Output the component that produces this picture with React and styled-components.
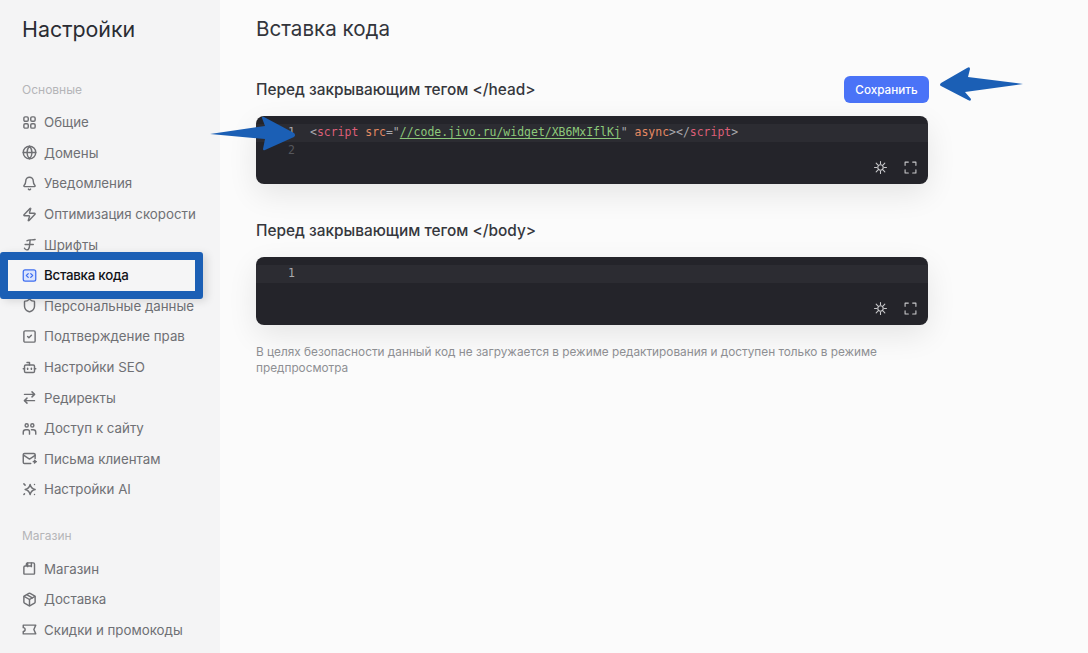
import React from 'react'
import styled, { createGlobalStyle } from 'styled-components'
import { Globe, Bell, Zap, Shield, SquareCheck, Bot, ArrowRightLeft, Package } from 'lucide-react'

const Global = createGlobalStyle`
  html, body { margin: 0; padding: 0; height: 100%; overflow: hidden; }
  body { font-family: Inter, "Noto Sans", sans-serif; background: #fbfbfb; }
`

const Page = styled.div`
  display: flex;
  height: 653px;
  overflow: hidden;
`

const Sidebar = styled.aside`
  flex: 0 0 220px;
  background: #f4f4f5;
  padding-top: 15px;
  box-sizing: border-box;
  overflow: hidden;
`

const SideTitle = styled.div`
  font-size: 21.4px;
  line-height: 28px;
  color: #2a2c33;
  padding-left: 22px;
  margin-bottom: 39px;
`

const GroupLabel = styled.div`
  font-size: 12px;
  line-height: 16px;
  color: #b4b5b8;
  padding-left: 22px;
  margin-bottom: 9px;
`

const Group = styled.div`
  margin-bottom: 23.5px;
`

const Row = styled.div`
  display: flex;
  align-items: center;
  gap: 7px;
  height: 30.6px;
  padding-left: 22px;
  font-size: 13.3px;
  color: ${p => (p.$active ? '#111216' : '#6f7074')};
  font-weight: ${p => (p.$active ? 500 : 400)};
  position: ${p => (p.$active ? 'relative' : 'static')};

  ${p => p.$active && `
    letter-spacing: -0.25px;
    &::before {
      content: '';
      position: absolute;
      left: 0;
      right: 17px;
      top: -7.5px;
      bottom: -8px;
      border: 8px solid #1b5fb5;
      border-radius: 3px;
      background: #f5f5f6;
      box-shadow: 4px 2px 8px rgba(0, 0, 0, 0.12);
    }
    & > * { position: relative; z-index: 1; }
  `}
`

const IconBox = styled.span`
  display: flex;
  width: 15px;
  height: 15px;
  color: ${p => (p.$active ? '#3f6ef0' : '#6f7074')};
  svg { width: 15px; height: 15px; stroke-width: 2.3; }
`

const Main = styled.main`
  flex: 1;
  padding: 15px 0 0 36px;
  position: relative;
`

const Heading = styled.h1`
  margin: 0 0 32px;
  font-size: 20.6px;
  line-height: 28px;
  font-weight: 400;
  color: #33353b;
`

const Section = styled.section`
  width: 672px;
  margin-bottom: 32px;
`

const SectionHead = styled.div`
  display: flex;
  align-items: center;
  justify-content: space-between;
  height: 28px;
  margin-bottom: 13px;
`

const SectionTitle = styled.h2`
  margin: 0;
  font-size: 15.4px;
  font-weight: 500;
  color: #35373d;
`

const SaveButton = styled.button`
  width: 85px;
  height: 26.5px;
  margin: 1px -1px 0 0;
  padding: 0;
  border: 0;
  border-radius: 6px;
  background: #4a73f7;
  color: #fff;
  font-family: inherit;
  font-size: 11.7px;
  font-weight: 500;
`

const Editor = styled.div`
  height: 68px;
  position: relative;
  border-radius: 8px;
  background: #24242a;
  box-shadow: 0 10px 30px rgba(0, 0, 0, 0.09);
  padding-top: 8px;
  box-sizing: border-box;
  font-family: "DejaVu Sans Mono", monospace;
  font-size: 11.47px;
  line-height: 17.5px;
`

const CodeLine = styled.div`
  display: flex;
  height: 17.5px;
  background: ${p => (p.$current ? '#2c2c32' : 'transparent')};
  white-space: pre;
`

const LineNo = styled.span`
  width: 39px;
  text-align: right;
  color: ${p => (p.$current ? '#a9a9ad' : '#56575c')};
  margin-right: 15px;
`

const Tag = styled.span` color: #dd5f78; `
const Punct = styled.span` color: #a9a9ad; `
const Attr = styled.span` color: #e58a62; `
const Str = styled.span`
  color: #8cc97a;
  text-decoration: underline;
  text-underline-offset: 2px;
`

const EditorTools = styled.div`
  position: absolute;
  right: 11px;
  bottom: 10px;
  display: flex;
  gap: 17px;
  color: #c9c9cc;
  svg { display: block; width: 13px; height: 13px; }
`

const Note = styled.p`
  margin: -13px 0 0;
  width: 672px;
  font-size: 11.8px;
  line-height: 16px;
  color: #8f9094;
`

const Arrow = styled.svg`
  position: absolute;
  top: ${p => p.$top}px;
  left: ${p => p.$left}px;
`

const Stroke = ({ children }) => (
  <svg viewBox="0 0 24 24" fill="none" stroke="currentColor" strokeWidth="2" strokeLinecap="round" strokeLinejoin="round">
    {children}
  </svg>
)

const GridIcon = () => (
  <Stroke>
    <rect x="3" y="3" width="7" height="7" rx="2" />
    <rect x="14" y="3" width="7" height="7" rx="2" />
    <rect x="3" y="14" width="7" height="7" rx="2" />
    <rect x="14" y="14" width="7" height="7" rx="2" />
  </Stroke>
)

const FontIcon = () => (
  <Stroke>
    <path d="M8 6c2-2 9-1 13-2" />
    <path d="M5 12h13" />
    <path d="M13 5c-1 7 0 12-3 15-2 1-5 0-6-2" />
  </Stroke>
)

const CodeIcon = () => (
  <svg viewBox="0 0 24 24" fill="none">
    <rect x="2" y="3" width="20" height="18" rx="3" fill="#dbe4fd" stroke="currentColor" strokeWidth="2" />
    <path d="M10 9l-3 3 3 3M14 9l3 3-3 3" stroke="currentColor" strokeWidth="2" strokeLinecap="round" strokeLinejoin="round" />
  </svg>
)

const PeopleIcon = () => (
  <Stroke>
    <circle cx="7.5" cy="7" r="2.5" />
    <circle cx="16.5" cy="7" r="2.5" />
    <path d="M2 21v-3a4 4 0 0 1 4-4h3a3 3 0 0 1 3 3v4" />
    <path d="M15 14h3a4 4 0 0 1 4 4v3" />
  </Stroke>
)

const MailIcon = () => (
  <Stroke>
    <path d="M21 12V6a2 2 0 0 0-2-2H4a2 2 0 0 0-2 2v12a2 2 0 0 0 2 2h10" />
    <path d="M3 7l9 6 9-6" />
    <path d="M18 17h5M20 15l2 2-2 2" />
  </Stroke>
)

const SparkIcon = () => (
  <Stroke>
    <path d="M13 4c1 4 3 7 8 8-5 1-7 4-8 8-1-4-3-7-8-8 5-1 7-4 8-8z" />
    <path d="M3 3l2 2M3 20l1-1M20 4h.01M20 20h.01" />
  </Stroke>
)

const BagIcon = () => (
  <Stroke>
    <path d="M7 8V5a2 2 0 0 1 2-2h9a2 2 0 0 1 2 2v15a1 1 0 0 1-1 1H4a1 1 0 0 1-1-1V10a2 2 0 0 1 2-2h10" />
    <path d="M9 3v6M15 3v6" />
  </Stroke>
)

const TicketIcon = () => (
  <Stroke>
    <path d="M2 5h20l-3 7 3 7H2v-4a3 3 0 0 0 0-6z" />
  </Stroke>
)

// the theme toggle in the editor: a ring with dense short rays
const RaysIcon = () => (
  <Stroke>
    <circle cx="12" cy="12" r="5" />
    <path d="M12 1v4M12 19v4M1 12h4M19 12h4M4 4l3 3M17 17l3 3M20 4l-3 3M7 17l-3 3" />
  </Stroke>
)

const CornersIcon = () => (
  <Stroke>
    <path d="M2 8V2h6M16 2h6v6M22 16v6h-6M8 22H2v-6" />
  </Stroke>
)

const mainItems = [
  ['Общие', GridIcon],
  ['Домены', Globe],
  ['Уведомления', Bell],
  ['Оптимизация скорости', Zap],
  ['Шрифты', FontIcon],
  ['Вставка кода', CodeIcon, true],
  ['Персональные данные', Shield],
  ['Подтверждение прав', SquareCheck],
  ['Настройки SEO', Bot],
  ['Редиректы', ArrowRightLeft],
  ['Доступ к сайту', PeopleIcon],
  ['Письма клиентам', MailIcon],
  ['Настройки AI', SparkIcon],
]

const shopItems = [
  ['Магазин', BagIcon],
  ['Доставка', Package],
  ['Скидки и промокоды', TicketIcon],
]

const NavRows = ({ items }) =>
  items.map(([label, Icon, active]) => (
    <Row key={label} $active={active}>
      <IconBox $active={active}><Icon /></IconBox>
      <span>{label}</span>
    </Row>
  ))

const Tools = () => (
  <EditorTools>
    <RaysIcon />
    <CornersIcon />
  </EditorTools>
)

export default function App() {
  return (
    <Page>
      <Global />
      <Sidebar>
        <SideTitle>Настройки</SideTitle>
        <Group>
          <GroupLabel>Основные</GroupLabel>
          <NavRows items={mainItems} />
        </Group>
        <Group>
          <GroupLabel>Магазин</GroupLabel>
          <NavRows items={shopItems} />
        </Group>
      </Sidebar>
      <Main>
        <Heading>Вставка кода</Heading>
        <Section>
          <SectionHead>
            <SectionTitle>Перед закрывающим тегом &lt;/head&gt;</SectionTitle>
            <SaveButton>Сохранить</SaveButton>
          </SectionHead>
          <Editor>
            <CodeLine $current>
              <LineNo $current>1</LineNo>
              <span>
                <Punct>&lt;</Punct><Tag>script</Tag> <Attr>src</Attr><Punct>="</Punct>
                <Str>//code.jivo.ru/widget/XB6MxIflKj</Str>
                <Punct>"</Punct> <Attr>async</Attr><Punct>&gt;&lt;/</Punct><Tag>script</Tag><Punct>&gt;</Punct>
              </span>
            </CodeLine>
            <CodeLine>
              <LineNo>2</LineNo>
            </CodeLine>
            <Tools />
          </Editor>
        </Section>
        <Section>
          <SectionHead>
            <SectionTitle>Перед закрывающим тегом &lt;/body&gt;</SectionTitle>
          </SectionHead>
          <Editor>
            <CodeLine $current>
              <LineNo $current>1</LineNo>
            </CodeLine>
            <Tools />
          </Editor>
        </Section>
        <Note>
          В целях безопасности данный код не загружается в режиме редактирования и доступен только в режиме предпросмотра
        </Note>
        <Arrow $left={-11} $top={112} width="88" height="42" viewBox="0 0 88 42">
          <path d="M1 22 L56 14 L53 6 Q53 4 55 5 L85 21 Q87 23 85 25 L56 38 Q54 39 54 37 L56 27 Z" fill="#1b5fb5" />
        </Arrow>
        <Arrow $left={719} $top={65} width="86" height="40" viewBox="0 0 86 40">
          <path d="M84 19 L29 12 L31 4 Q31 1 28 3 L2 18 Q0 20 2 21 L29 35 Q32 37 32 34 L26 27 Z" fill="#1b5fb5" />
        </Arrow>
      </Main>
    </Page>
  )
}
